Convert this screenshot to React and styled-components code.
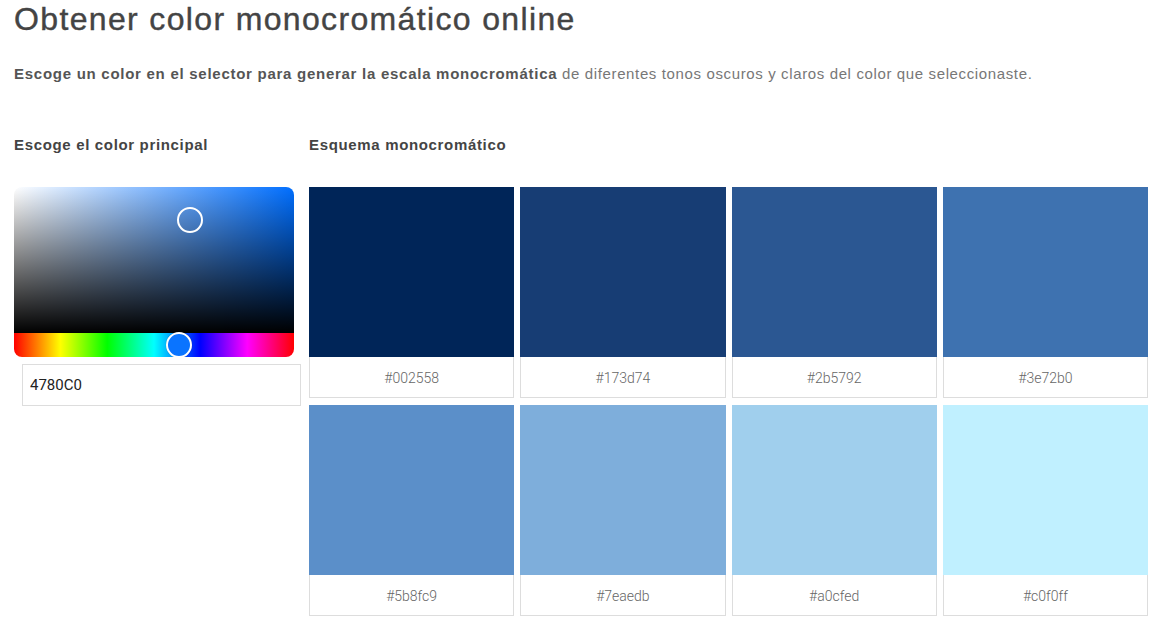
import React from 'react';
import styled, { createGlobalStyle } from 'styled-components';

const GlobalStyle = createGlobalStyle`
	html, body {
		margin: 0;
		padding: 0;
		background: #fff;
	}
	body {
		font-family: 'Liberation Sans', Arial, sans-serif;
		color: #444;
	}
`;

const Page = styled.div`
	padding: 0 14px;
	width: 1134px;
`;

const Title = styled.h1`
	margin: 0;
	padding-top: 1px;
	font-size: 32px;
	font-weight: normal;
	line-height: 37px;
	letter-spacing: 1.35px;
	color: #444;
	-webkit-text-stroke: 0.4px #444;
`;

const Intro = styled.p`
	margin: 26px 0 0;
	font-size: 15px;
	line-height: 20px;
	letter-spacing: 0.63px;
	color: #777;
	b {
		color: #555;
		letter-spacing: 0.73px;
	}
`;

const Columns = styled.div`
	display: flex;
	gap: 8px;
	margin-top: 51px;
`;

const Left = styled.div`
	width: 287px;
	flex-shrink: 0;
`;

const Right = styled.div`
	flex: 1;
`;

const Heading = styled.h3`
	margin: 0 0 32px;
	font-size: 15px;
	line-height: 20px;
	font-weight: bold;
	letter-spacing: 0.66px;
	color: #444;
`;

const Picker = styled.div`
	position: relative;
	width: 280px;
	border-radius: 8px;
	overflow: hidden;
`;

const SatArea = styled.div`
	height: 146px;
	background: linear-gradient(to top, #000, rgba(0, 0, 0, 0)),
		linear-gradient(to right, #fff, hsl(${(p) => p.$hue}, 100%, 50%));
`;

const HueBar = styled.div`
	height: 24px;
	background: linear-gradient(
		to right,
		#f00 0%,
		#ff0 16.6%,
		#0f0 33.3%,
		#0ff 50%,
		#00f 66.6%,
		#f0f 83.3%,
		#f00 100%
	);
`;

const Handle = styled.span`
	position: absolute;
	width: 22px;
	height: 22px;
	border: 2px solid #fff;
	border-radius: 50%;
	transform: translate(-50%, -50%);
	background: ${(p) => p.$fill || 'transparent'};
	box-shadow: ${(p) => (p.$fill ? '0 0 1px rgba(0,0,0,0.4)' : 'none')};
`;

const HexInput = styled.input`
	display: block;
	box-sizing: border-box;
	width: 279px;
	height: 42px;
	margin: 7px 0 0 8px;
	padding: 0 7px;
	border: 1px solid #ddd;
	font-family: Roboto, 'Liberation Sans', sans-serif;
	font-size: 15px;
	font-weight: 400;
	color: #222;
	outline: none;
`;

const Grid = styled.div`
	display: grid;
	grid-template-columns: repeat(4, 1fr);
	column-gap: 6px;
	row-gap: 7px;
	width: 839px;
`;

const Swatch = styled.div`
	display: flex;
	flex-direction: column;
`;

const Chip = styled.div`
	height: 170px;
	background: ${(p) => p.$color};
`;

const Label = styled.div`
	box-sizing: border-box;
	height: 41px;
	padding-top: 2px;
	border: 1px solid #ddd;
	border-top: none;
	display: flex;
	align-items: center;
	justify-content: center;
	font-family: Roboto, 'Liberation Sans', sans-serif;
	font-weight: 300;
	font-size: 14px;
	color: #666;
`;

const shades = [
	'#002558',
	'#173d74',
	'#2b5792',
	'#3e72b0',
	'#5b8fc9',
	'#7eaedb',
	'#a0cfed',
	'#c0f0ff',
];

export default function App() {
	return (
		<Page>
			<GlobalStyle />
			<Title>Obtener color monocromático online</Title>
			<Intro>
				<b>Escoge un color en el selector para generar la escala monocromática</b> de
				diferentes tonos oscuros y claros del color que seleccionaste.
			</Intro>
			<Columns>
				<Left>
					<Heading>Escoge el color principal</Heading>
					<Picker>
						<SatArea $hue={214} />
						<HueBar />
						<Handle style={{ left: 176, top: 33 }} />
						<Handle $fill="#0a74ff" style={{ left: 165, top: 158 }} />
					</Picker>
					<HexInput defaultValue="4780C0" />
				</Left>
				<Right>
					<Heading>Esquema monocromático</Heading>
					<Grid>
						{shades.map((c) => (
							<Swatch key={c}>
								<Chip $color={c} />
								<Label>{c}</Label>
							</Swatch>
						))}
					</Grid>
				</Right>
			</Columns>
		</Page>
	);
}
